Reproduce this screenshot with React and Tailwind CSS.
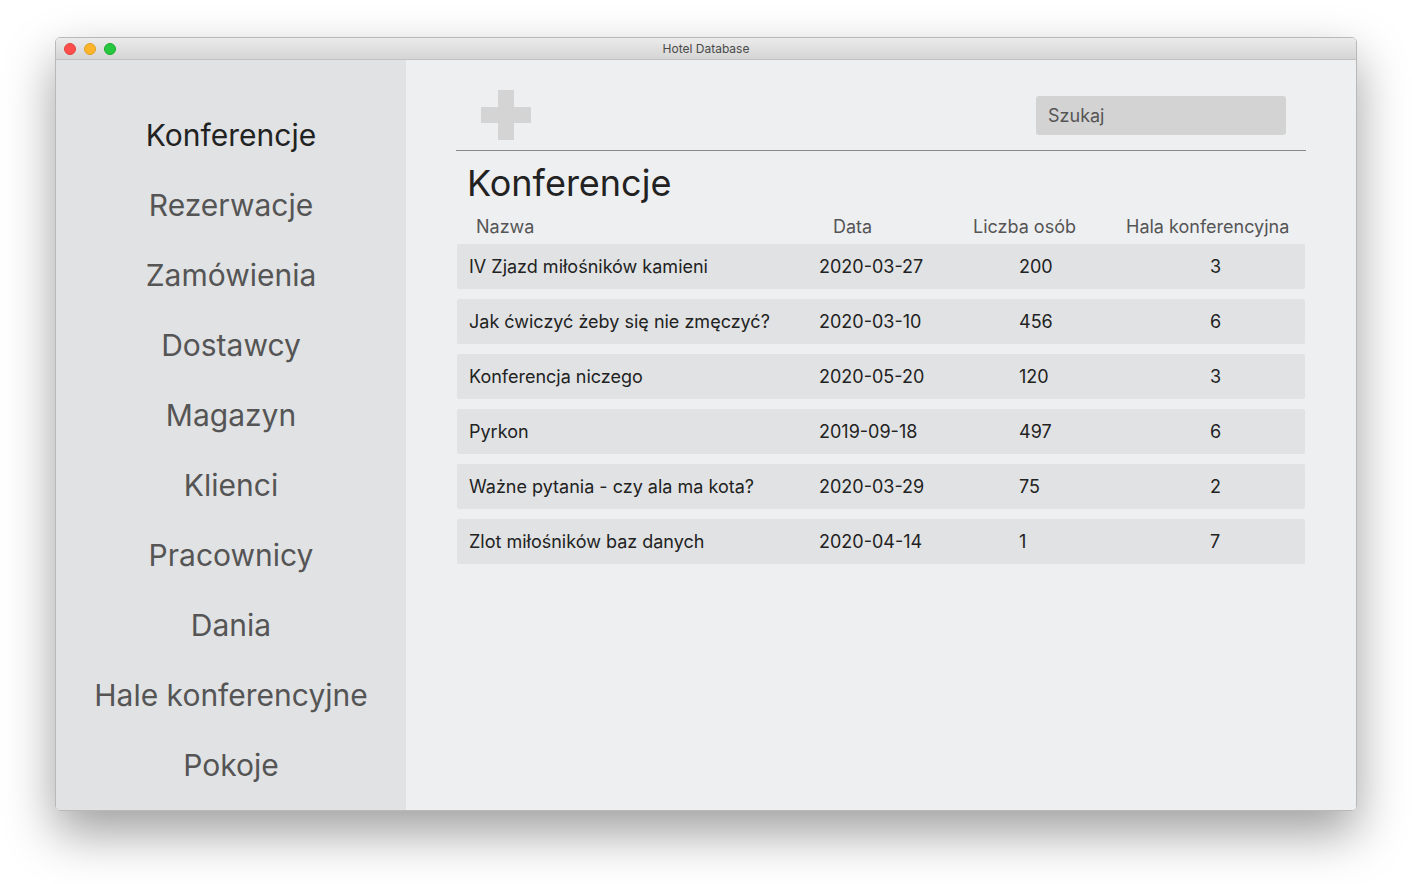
import React from 'react';

const menu = [
  'Konferencje',
  'Rezerwacje',
  'Zamówienia',
  'Dostawcy',
  'Magazyn',
  'Klienci',
  'Pracownicy',
  'Dania',
  'Hale konferencyjne',
  'Pokoje',
];

const rows = [
  { name: 'IV Zjazd miłośników kamieni', date: '2020-03-27', count: '200', hall: '3' },
  { name: 'Jak ćwiczyć żeby się nie zmęczyć?', date: '2020-03-10', count: '456', hall: '6' },
  { name: 'Konferencja niczego', date: '2020-05-20', count: '120', hall: '3' },
  { name: 'Pyrkon', date: '2019-09-18', count: '497', hall: '6' },
  { name: 'Ważne pytania - czy ala ma kota?', date: '2020-03-29', count: '75', hall: '2' },
  { name: 'Zlot miłośników baz danych', date: '2020-04-14', count: '1', hall: '7' },
];

const PlusIcon = () => (
  <svg width="50" height="50" viewBox="0 0 50 50">
    <rect x="17" y="0" width="16" height="50" fill="#d4d4d4" />
    <rect x="0" y="17" width="50" height="16" fill="#d4d4d4" />
  </svg>
);

export default function App() {
  return (
    <div className="w-[1412px] h-[884px] bg-white pt-[37px] pl-[55px] font-['Inter',sans-serif] overflow-hidden">
      <div className="w-[1302px] h-[774px] flex flex-col rounded-[5px] overflow-hidden border border-[#b9b9b9] shadow-[0_22px_50px_rgba(0,0,0,0.38)]">
        {/* title bar */}
        <div className="h-[22px] shrink-0 flex items-center relative bg-gradient-to-b from-[#ebebeb] to-[#d5d5d5] border-b border-[#c2c2c2]">
          <div className="flex gap-[8px] pl-[8px]">
            <span className="w-[12px] h-[12px] rounded-full bg-[#fe4d4a] border border-[#e0443e]" />
            <span className="w-[12px] h-[12px] rounded-full bg-[#fdb42a] border border-[#dea123]" />
            <span className="w-[12px] h-[12px] rounded-full bg-[#27c73f] border border-[#1aab29]" />
          </div>
          <div className="absolute inset-0 flex items-center justify-center text-[12px] text-[#4a4a4a]">
            Hotel Database
          </div>
        </div>

        <div className="flex flex-1 min-h-0">
          {/* sidebar */}
          <div className="w-[350px] shrink-0 bg-[#e1e2e4] pt-[40px] flex flex-col">
            {menu.map((m, i) => (
              <div
                key={m}
                className={`h-[70px] flex items-center justify-center text-[30px] ${i === 0 ? 'text-[#222222]' : 'text-[#555555]'}`}
              >
                {m}
              </div>
            ))}
          </div>

          {/* main */}
          <div className="flex-1 bg-[#eeeff1] px-[50px] pt-[30px]">
            <div className="h-[50px] flex items-center justify-between pl-[25px] pr-[20px]">
              <PlusIcon />
              <div className="w-[250px] h-[39px] rounded-[3px] bg-[#d3d3d3] flex items-center px-[12px] text-[18px] text-[#555555]">
                Szukaj
              </div>
            </div>
            <div className="mt-[10px] border-t border-[#8a8a8a]" />

            <h1 className="pt-[12px] pl-[11px] text-[36px] leading-[40px] text-[#222222]">Konferencje</h1>

            <div className="mt-[5px] h-[36px] grid grid-cols-[357px_140px_153px_1fr] items-center pl-[20px] text-[18px] text-[#555555]">
              <span>Nazwa</span>
              <span>Data</span>
              <span>Liczba osób</span>
              <span>Hala konferencyjna</span>
            </div>

            <div className="flex flex-col gap-[10px] px-px">
              {rows.map((r) => (
                <div
                  key={r.name}
                  className="h-[45px] rounded-[2px] bg-[#e1e2e4] grid grid-cols-[350px_200px_191px_1fr] items-center pl-[12px] text-[18px] text-[#222222]"
                >
                  <span>{r.name}</span>
                  <span>{r.date}</span>
                  <span>{r.count}</span>
                  <span>{r.hall}</span>
                </div>
              ))}
            </div>
          </div>
        </div>
      </div>
    </div>
  );
}
